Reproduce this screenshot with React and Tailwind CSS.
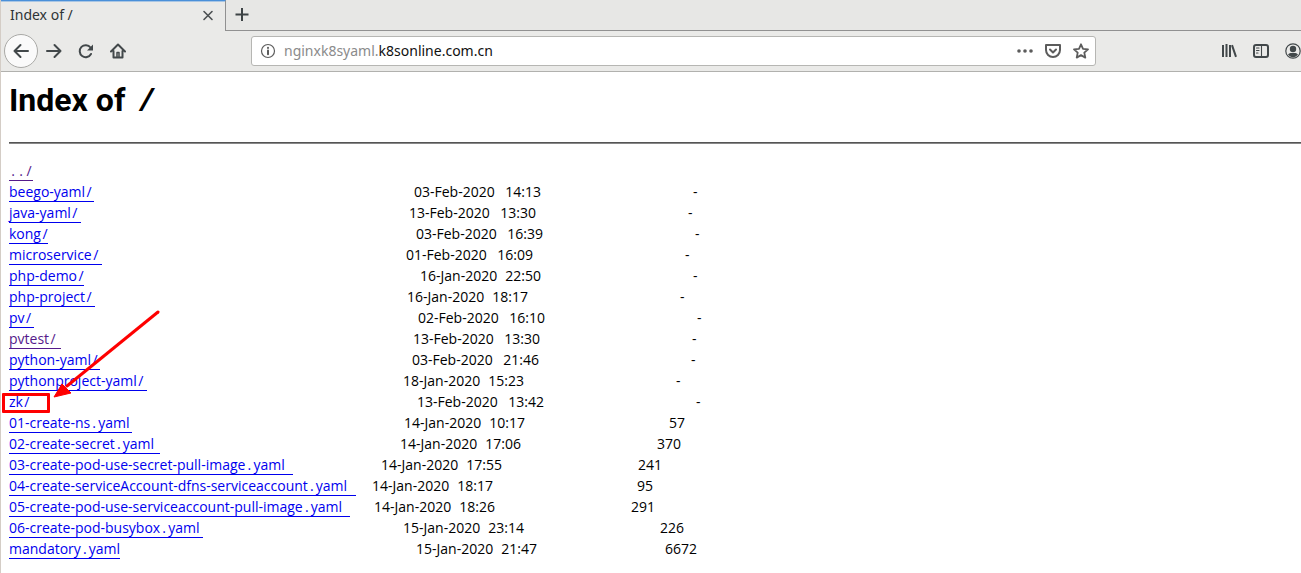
import React from "react";

const CHAR = 8;

// name, link width, date, time, size, visited
const FILES = [
  ["beego-yaml/", 85, "03-Feb-2020", "14:13", "-"],
  ["java-yaml/", 72, "13-Feb-2020", "13:30", "-"],
  ["kong/", 39, "03-Feb-2020", "16:39", "-"],
  ["microservice/", 93, "01-Feb-2020", "16:09", "-"],
  ["php-demo/", 75, "16-Jan-2020", "22:50", "-"],
  ["php-project/", 86, "16-Jan-2020", "18:17", "-"],
  ["pv/", 25, "02-Feb-2020", "16:10", "-"],
  ["pvtest/", 52, "13-Feb-2020", "13:30", "-", true],
  ["python-yaml/", 91, "03-Feb-2020", "21:46", "-"],
  ["pythonproject-yaml/", 138, "18-Jan-2020", "15:23", "-"],
  ["zk/", 24, "13-Feb-2020", "13:42", "-"],
  ["01-create-ns.yaml", 123, "14-Jan-2020", "10:17", "57"],
  ["02-create-secret.yaml", 151, "14-Jan-2020", "17:06", "370"],
  ["03-create-pod-use-secret-pull-image.yaml", 284, "14-Jan-2020", "17:55", "241"],
  ["04-create-serviceAccount-dfns-serviceaccount.yaml", 347, "14-Jan-2020", "18:17", "95"],
  ["05-create-pod-use-serviceaccount-pull-image.yaml", 341, "14-Jan-2020", "18:26", "291"],
  ["06-create-pod-busybox.yaml", 194, "15-Jan-2020", "23:14", "226"],
  ["mandatory.yaml", 111, "15-Jan-2020", "21:47", "6672"],
];

// Dots and slashes take a full character cell.
function Name({ text }) {
  return text.split(/([./])/).map((part, i) =>
    part === "." || part === "/" ? (
      <span key={i} className="inline-block w-2 text-center">
        {part}
      </span>
    ) : (
      part
    )
  );
}

function FileLink({ name, width, visited }) {
  return (
    <a
      href={"#" + name}
      style={{ width }}
      className={
        "block h-5 shrink-0 border-b leading-5 whitespace-nowrap " +
        (visited ? "border-[#551a8b] text-[#551a8b]" : "border-[#0000ee] text-[#0000ee]")
      }
    >
      <Name text={name} />
    </a>
  );
}

function Callout() {
  return (
    <>
      <span className="pointer-events-none absolute top-px -left-[7px] h-5 w-12 rounded-[1px] border-3 border-[#fe0000]" />
      <svg className="pointer-events-none absolute -top-[82px] left-[44px] h-[90px] w-[108px]" viewBox="0 0 108 90">
        <path d="M105 2 L14 76" stroke="#fe0000" strokeWidth="3" strokeLinecap="round" />
        <path d="M1 87 L9 74 L12 77 L18 83 Z" fill="#fe0000" stroke="#fe0000" strokeLinejoin="round" />
      </svg>
    </>
  );
}

function FileRow({ file }) {
  const [name, width, date, time, size, visited] = file;
  const dateWidth = date.includes("Feb") ? 127 : 121;
  return (
    <li className="relative flex h-[21px] items-start">
      <FileLink name={name} width={width} visited={visited} />
      <span className="shrink-0" style={{ width: (51 - name.length) * CHAR }} />
      <span className="flex h-5 shrink-0 items-center justify-between whitespace-nowrap" style={{ width: dateWidth }}>
        <span>{date}</span>
        <span>{time}</span>
      </span>
      <span className="shrink-0" style={{ width: (20 - size.length) * CHAR }} />
      <span className="flex h-5 items-center">{size}</span>
      {name === "zk/" && <Callout />}
    </li>
  );
}

const stroke = { fill: "none", stroke: "currentColor", strokeWidth: 2, strokeLinecap: "round", strokeLinejoin: "round" };

function Icon({ children }) {
  return (
    <svg className="size-4 shrink-0" viewBox="0 0 16 16" {...stroke}>
      {children}
    </svg>
  );
}

export default function App() {
  return (
    <div className="min-h-screen border-l border-[#d4cdc6] bg-white font-['Noto_Sans',sans-serif] text-[#2e3436]">
      <header className="overflow-hidden bg-[#eaeae8]">
        <div className="flex h-[31px] items-stretch">
          <div className="flex w-[225px] items-center justify-between border-t border-r border-t-[#4a90d9] border-r-[#919191] pr-[7px] pb-[3px] pl-[9px] shadow-[inset_0_1px_0_#a9c6e4]">
            <span className="text-[14px] leading-5">Index of /</span>
            <button type="button" aria-label="Close tab" className="flex size-5 items-center justify-center text-[#4b5052]">
              <Icon>
                <path d="M4 4.500l8 8M12 4.500l-8 8" strokeWidth="1.600" />
              </Icon>
            </button>
          </div>
          <div className="flex flex-1 items-center border-b border-[#919191] bg-[#e7e7e5] pl-2 text-[#3d4345]">
            <button type="button" aria-label="New tab" className="flex items-center">
              <Icon>
                <path d="M8 1v13M1.500 7.500h13" strokeLinecap="butt" />
              </Icon>
            </button>
          </div>
        </div>
        <div className="flex h-10 items-center pl-[3px] text-[#42484a]">
          <div className="flex w-[247px] shrink-0 items-center gap-4">
            <button type="button" aria-label="Back" className="-mr-2 flex size-[34px] items-center justify-center rounded-full border border-[#a9a9a6] bg-[#fafafa]">
              <Icon>
                <path d="M15 8H1.5M7.5 2L1.5 8l6 6" />
              </Icon>
            </button>
            <button type="button" aria-label="Forward">
              <Icon>
                <path d="M1 8h13.5M8.500 2l6 6-6 6" />
              </Icon>
            </button>
            <button type="button" aria-label="Reload">
              <Icon>
                <path d="M13 11a6 6 0 1 1-.5-6.500" />
                <path d="M15 1.500v6H9z" fill="currentColor" stroke="none" />
              </Icon>
            </button>
            <button type="button" aria-label="Home">
              <Icon>
                <path d="M1 8.500l7-7 7 7M3.500 8v6.500h9V8" />
                <path d="M7 14V9.500h2V14" strokeWidth="1.500" />
              </Icon>
            </button>
          </div>
          <div className="flex h-[30px] w-[845px] min-w-0 items-center rounded-[3px] border border-[#b6b6b3] bg-white pr-1.5 pl-2 text-[#5c5c5c]">
            <Icon>
              <circle cx="8" cy="8" r="6.500" strokeWidth="1.200" />
              <path d="M8 7.500v3.700M8 4.700v.2" />
            </Icon>
            <div role="textbox" aria-label="Address" contentEditable suppressContentEditableWarning className="ml-2 flex-1 text-[14px] leading-5 whitespace-nowrap text-[#8b8b8b] outline-none">
              nginxk8syaml.<span className="text-[#101010]">k8sonline.com.cn</span>
            </div>
            <div className="flex items-center gap-3">
              <button type="button" aria-label="Page actions">
                <svg className="size-4" viewBox="0 0 16 16" fill="currentColor">
                  <circle cx="2" cy="8" r="1.800" />
                  <circle cx="8" cy="8" r="1.800" />
                  <circle cx="14" cy="8" r="1.800" />
                </svg>
              </button>
              <button type="button" aria-label="Save to Pocket">
                <Icon>
                  <path d="M1 2h14v5a7 7 0 0 1-14 0z" />
                  <path d="M5 6.500l3 3 3-3" />
                </Icon>
              </button>
              <button type="button" aria-label="Bookmark">
                <Icon>
                  <path d="M8 1.300l2 4.500 5 .5-3.700 3.300 1 5L8 12.100l-4.300 2.500 1-5L1 6.300l5-.5z" strokeWidth="1.800" />
                </Icon>
              </button>
            </div>
          </div>
          <div className="ml-auto flex shrink-0 items-center gap-4 pl-4">
            <button type="button" aria-label="Library">
              <svg className="size-4" viewBox="0 0 16 16" fill="none" stroke="currentColor" strokeWidth="2">
                <path d="M2 2v12M5.500 1v13M9 2v12M11 2.200l4 11.600" />
              </svg>
            </button>
            <button type="button" aria-label="Sidebars">
              <Icon>
                <rect x="1" y="2" width="14" height="12" rx="2" />
                <path d="M8.500 2v12M3.500 5h2.500M3.500 7.500h2.500M3.500 10h1.500" strokeWidth="1.100" />
              </Icon>
            </button>
            <button type="button" aria-label="Account">
              <svg className="size-4" viewBox="0 0 16 16">
                <circle cx="8" cy="8" r="7.200" fill="none" stroke="currentColor" strokeWidth="1.200" />
                <circle cx="8" cy="6" r="3.200" fill="currentColor" />
                <path d="M3 11.500c1.500-1.700 2.500-1.500 5-1.500s3.500-.2 5 1.500a6 6 0 0 1-10 0z" fill="currentColor" />
              </svg>
            </button>
          </div>
        </div>
        <div className="h-px bg-[#b1b1ae]" />
      </header>

      <main className="pl-2 text-black">
        <h1 className="flex h-12 items-baseline gap-3 pt-2 font-['Roboto','Liberation_Sans',sans-serif] text-[32px] leading-10 font-bold">
          <span>Index of</span>
          <span className="font-['Liberation_Mono',monospace]">/</span>
        </h1>
        <hr className="mt-[22px] h-0.5 border-0 border-t border-b border-t-[#555555] border-b-[#888888]" />
        <ul className="mt-[17px] font-['Open_Sans','Noto_Sans',sans-serif] text-[14px] leading-5">
          <li className="flex h-[21px] items-start">
            <FileLink name="../" width={24} visited />
          </li>
          {FILES.map((f) => (
            <FileRow key={f[0]} file={f} />
          ))}
        </ul>
      </main>
    </div>
  );
}
